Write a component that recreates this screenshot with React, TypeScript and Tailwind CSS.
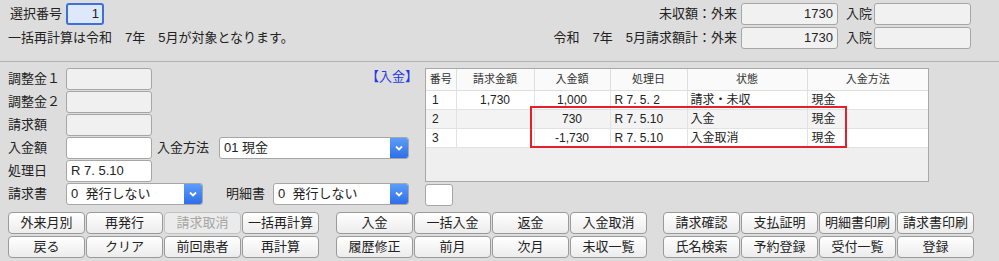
import React from "react"

const rows = [
  { no: "1", bill: "1,730", paid: "1,000", date: "R 7. 5. 2", state: "請求・未収", method: "現金" },
  { no: "2", bill: "", paid: "730", date: "R 7. 5.10", state: "入金", method: "現金" },
  { no: "3", bill: "", paid: "-1,730", date: "R 7. 5.10", state: "入金取消", method: "現金" },
]

const buttonRows = [
  [
    ["外来月別", "再発行", "請求取消", "一括再計算"],
    ["入金", "一括入金", "返金", "入金取消"],
    ["請求確認", "支払証明", "明細書印刷", "請求書印刷"],
  ],
  [
    ["戻る", "クリア", "前回患者", "再計算"],
    ["履歴修正", "前月", "次月", "未収一覧"],
    ["氏名検索", "予約登録", "受付一覧", "登録"],
  ],
]

function Box({ className = "", children }: { className?: string; children?: React.ReactNode }) {
  return (
    <div className={`h-[22px] rounded-[3px] border border-[#a6a6a6] px-[4px] text-[13px] leading-[20px] ${className}`}>
      {children}
    </div>
  )
}

function Select({ value, className }: { value: string; className: string }) {
  return (
    <div className={`flex h-[22px] rounded-[3px] border border-[#a6a6a6] bg-white ${className}`}>
      <div className="flex-1 whitespace-pre px-[4px] text-[13px] leading-[20px]">{value}</div>
      <div className="flex w-[18px] items-center justify-center rounded-r-[2px] bg-gradient-to-b from-[#5c9dfb] to-[#2f6ee6]">
        <svg width="8" height="6" viewBox="0 0 8 6">
          <path d="M1 1.5 L4 4.5 L7 1.5" fill="none" stroke="white" strokeWidth="1.8" />
        </svg>
      </div>
    </div>
  )
}

function Label({ className = "", children }: { className?: string; children: React.ReactNode }) {
  return <div className={`text-[13px] leading-[22px] text-[#222] ${className}`}>{children}</div>
}

export default function App() {
  return (
    <div className="h-[261px] w-[999px] bg-[#dddddd] font-['Liberation_Sans','Noto_Sans_CJK_JP',sans-serif] text-[#222]">
      {/* Header */}
      <div className="flex h-[62px] justify-between border-b border-[#b3b3b3] pl-[8px] pr-[28px] pt-[3px]">
        <div className="flex flex-col gap-[2px]">
          <div className="flex h-[22px] items-center">
            <Label className="ml-[2px] w-[56px]">選択番号</Label>
            <div className="h-[22px] w-[38px] rounded-[3px] border-2 border-[#3d70d8] bg-[#dde9fb] pr-[3px] text-right text-[13px] leading-[18px]">
              1
            </div>
          </div>
          <Label className="whitespace-pre">一括再計算は令和　7年　5月が対象となります。</Label>
        </div>
        <div className="flex flex-col gap-[2px]">
          {["未収額：外来", "令和　7年　5月請求額計：外来"].map((label) => (
            <div key={label} className="flex h-[22px] items-center">
              <Label className="w-[186px] whitespace-pre text-right">{label}</Label>
              <Box className="ml-[4px] w-[97px] bg-[#f1f1f1] text-right">1730</Box>
              <Label className="ml-[8px] w-[28px]">入院</Label>
              <Box className="w-[97px] bg-[#f1f1f1]" />
            </div>
          ))}
        </div>
      </div>

      {/* Form and table */}
      <div className="flex pl-[8px] pt-[6px]">
        <div className="flex w-[417px] flex-col gap-[1px]">
          <div className="flex">
            <Label className="w-[58px]">調整金１</Label>
            <Box className="w-[86px] bg-[#f0f0f0]" />
            <div className="flex-1 pr-[7px] text-right text-[13px] leading-[18px] text-[#2437e6]">【入金】</div>
          </div>
          <div className="flex">
            <Label className="w-[58px]">調整金２</Label>
            <Box className="w-[86px] bg-[#f0f0f0]" />
          </div>
          <div className="flex">
            <Label className="w-[58px]">請求額</Label>
            <Box className="w-[86px] bg-[#f0f0f0]" />
          </div>
          <div className="flex">
            <Label className="w-[58px]">入金額</Label>
            <Box className="w-[86px] bg-white" />
            <Label className="ml-[5px] w-[62px]">入金方法</Label>
            <Select value="01 現金" className="w-[190px]" />
          </div>
          <div className="flex">
            <Label className="w-[58px]">処理日</Label>
            <Box className="w-[86px] bg-white">R 7. 5.10</Box>
          </div>
          <div className="flex">
            <Label className="w-[58px]">請求書</Label>
            <Select value="0  発行しない" className="w-[137px]" />
            <Label className="ml-[23px] w-[47px]">明細書</Label>
            <Select value="0  発行しない" className="w-[136px]" />
          </div>
        </div>

        <div className="w-[504px]">
          <div className="relative h-[114px] border border-[#a8a8a8] bg-[#efefef]">
            <table className="w-full table-fixed border-collapse text-[12px]">
              <colgroup>
                <col className="w-[30px]" />
                <col className="w-[78px]" />
                <col className="w-[76px]" />
                <col className="w-[77px]" />
                <col className="w-[120px]" />
                <col />
              </colgroup>
              <thead>
                <tr className="h-[21px] bg-[#fafafa] text-[11px] text-[#333]">
                  {["番号", "請求金額", "入金額", "処理日", "状態", "入金方法"].map((h) => (
                    <th key={h} className="border-b border-r border-[#dedede] text-center font-normal last:border-r-0">
                      {h}
                    </th>
                  ))}
                </tr>
              </thead>
              <tbody>
                {rows.map((r, i) => (
                  <tr key={r.no} className={`h-[18px] ${i === 1 ? "bg-[#f3f3f3]" : "bg-white"}`}>
                    <td className="border-b border-r border-[#e2e2e2] pl-[6px]">{r.no}</td>
                    <td className="border-b border-r border-[#e2e2e2] text-center">{r.bill}</td>
                    <td className="border-b border-r border-[#e2e2e2] text-center">{r.paid}</td>
                    <td className="border-b border-r border-[#e2e2e2] pl-[4px]">{r.date}</td>
                    <td className="border-b border-r border-[#e2e2e2] pl-[3px]">{r.state}</td>
                    <td className="border-b border-[#e2e2e2] pl-[4px]">{r.method}</td>
                  </tr>
                ))}
              </tbody>
            </table>
            {/* highlight */}
            <div className="absolute left-[104px] top-[37px] h-[42px] w-[317px] border-2 border-[#e5202a]" />
          </div>
          <div className="mt-[2px] h-[22px] w-[28px] rounded-[3px] border border-[#a6a6a6] bg-white" />
        </div>
      </div>

      {/* Buttons */}
      <div className="mt-[6px] flex flex-col gap-[2px] pl-[8px]">
        {buttonRows.map((groups, ri) => (
          <div key={ri} className="flex">
            {groups.map((g, gi) => (
              <div key={gi} className={`flex gap-[1px] ${gi === 1 ? "ml-[17px]" : gi === 2 ? "ml-[16px]" : ""}`}>
                {g.map((label) => {
                  const disabled = label === "請求取消"
                  return (
                    <button
                      key={label}
                      className={`h-[22px] w-[77px] rounded-[4px] border text-[13px] leading-[20px] ${
                        disabled
                          ? "border-[#c2c2c2] bg-[#ebebeb] text-[#a6a6a6]"
                          : "border-[#9a9a9a] bg-gradient-to-b from-white to-[#ececec] text-[#222]"
                      }`}
                    >
                      {label}
                    </button>
                  )
                })}
              </div>
            ))}
          </div>
        ))}
      </div>
    </div>
  )
}
